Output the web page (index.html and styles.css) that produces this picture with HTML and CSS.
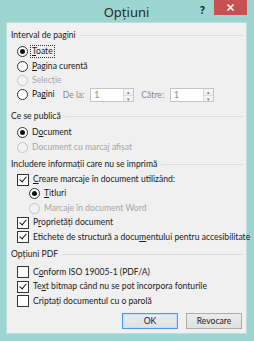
FILE: index.html
```html
<!DOCTYPE html>
<html lang="ro">
<head>
  <meta charset="UTF-8">
  <title>Opțiuni</title>
  <link rel="stylesheet" href="styles.css">
</head>
<body>

  <!-- Title bar -->
  <div class="titlebar">
    <span class="title">Opțiuni</span>
    <span class="help">?</span>
    <span class="close">
      <svg width="9" height="9" viewBox="0 0 9 9"><path d="M1.5 1.5l6 6M7.5 1.5l-6 6" stroke="#fff" stroke-width="1.6"/></svg>
    </span>
  </div>

  <div class="client">
    <div class="content">

      <!-- Interval de pagini -->
      <div class="group-title">Interval de pagini</div>
      <div class="group">
        <div class="row"><span class="radio on"></span><span class="label focus"><u>T</u>oate</span></div>
        <div class="row"><span class="radio"></span><span class="label"><u>P</u>agina curentă</span></div>
        <div class="row disabled"><span class="radio"></span><span class="label">Selecție</span></div>
        <div class="row">
          <span class="radio"></span><span class="label">Pa<u>g</u>ini</span>
          <span class="spin-label spin-from">De la:</span>
          <span class="spin"><span class="spin-value">1</span><span class="spin-btns"><i>&#9652;</i><i>&#9662;</i></span></span>
          <span class="spin-label spin-to">Către:</span>
          <span class="spin"><span class="spin-value">1</span><span class="spin-btns"><i>&#9652;</i><i>&#9662;</i></span></span>
        </div>
      </div>

      <!-- Ce se publica -->
      <div class="group-title sec2">Ce se publică</div>
      <div class="group">
        <div class="row"><span class="radio on"></span><span class="label">D<u>o</u>cument</span></div>
        <div class="row disabled"><span class="radio"></span><span class="label">Document cu marcaj afișat</span></div>
      </div>

      <!-- Includere informatii -->
      <div class="group-title sec3">Includere informații care nu se imprimă</div>
      <div class="group inc">
        <div class="row"><span class="check on"></span><span class="label"><u>C</u>reare marcaje în document utilizând:</span></div>
        <div class="row sub"><span class="radio on"></span><span class="label"><u>T</u>itluri</span></div>
        <div class="row sub disabled"><span class="radio"></span><span class="label">Marcaje în document Word</span></div>
        <div class="row"><span class="check on"></span><span class="label">P<u>r</u>oprietăți document</span></div>
        <div class="row"><span class="check on"></span><span class="label">Etichete de structură a docu<u>m</u>entului pentru accesibilitate</span></div>
      </div>

      <!-- Optiuni PDF -->
      <div class="group-title sec4">Opțiuni PDF</div>
      <div class="group pdf">
        <div class="row"><span class="check"></span><span class="label">C<u>o</u>nform ISO 19005-1 (PDF/A)</span></div>
        <div class="row"><span class="check on"></span><span class="label">Te<u>x</u>t bitmap când nu se pot încorpora fonturile</span></div>
        <div class="row"><span class="check"></span><span class="label">Criptați documentul cu o parolă</span></div>
      </div>

      <div class="buttons">
        <button class="btn default">OK</button>
        <button class="btn">Revocare</button>
      </div>

    </div>
  </div>

</body>
</html>
```

FILE: styles.css
```css
/* Basic Styling */
* {
  box-sizing: border-box;
}
body {
  margin: 0;
  width: 254px;
  height: 341px;
  background-color: #9dd5d1;
  font-family: Lato, "Noto Sans", sans-serif;
  font-size: 8.6px;
  color: #1a1a1a;
  overflow: hidden;
}

/* Title bar */
.titlebar {
  display: flex;
  align-items: flex-start;
  height: 22px;
  padding-right: 7px;
}
.title {
  flex: 1;
  padding-left: 58px;
  text-align: center;
  font-family: "Noto Sans", sans-serif;
  font-size: 13px;
  line-height: 24px;
  color: #2a2a2a;
}
.help {
  width: 19px;
  padding-top: 4px;
  padding-left: 5px;
  font-family: "Noto Sans", sans-serif;
  font-size: 10px;
  font-weight: bold;
  line-height: 12px;
  color: #222;
}
.close {
  width: 33px;
  height: 15px;
  background-color: #c75050;
  display: flex;
  align-items: center;
  justify-content: center;
}

/* Client area */
.client {
  margin: 0 7px 0 6px;
  height: 312px;
  background-color: #f0f0f0;
  border: 1px solid #b8dfdc;
}
.content {
  padding: 4px 3px 0 4px;
}

/* Group headers */
.group-title {
  display: flex;
  align-items: center;
  height: 16px;
  gap: 4px;
  white-space: nowrap;
}
.group-title::after {
  content: "";
  flex: 1;
  height: 1px;
  background-color: #dcdcdc;
}
.sec2 { margin-top: 6px; }
.sec3 { margin-top: 2px; }
.sec4 { margin-top: 2px; }

.group {
  padding-top: 1.5px;
}
.group.inc {
  padding-top: 0;
}
.group.pdf {
  padding-top: 3px;
}

/* Rows */
.row {
  display: flex;
  align-items: center;
  height: 14.4px;
  padding-left: 6px;
  white-space: nowrap;
}
.row.sub {
  padding-left: 18px;
}
.label {
  margin-left: 2px;
  padding: 0 1px;
  border: 1px dotted transparent;
  line-height: 11px;
}
.label.focus {
  border-color: #333;
}
.disabled .label {
  color: #a6a6a6;
}
u {
  text-underline-offset: 1px;
}

/* Radio buttons */
.radio {
  width: 11px;
  height: 11px;
  border: 1px solid #333;
  border-radius: 50%;
  background-color: #fff;
  display: flex;
  align-items: center;
  justify-content: center;
  flex-shrink: 0;
}
.radio.on::after {
  content: "";
  width: 5px;
  height: 5px;
  border-radius: 50%;
  background-color: #111;
}
.disabled .radio {
  border-color: #c4c4c4;
  background-color: #f3f3f3;
}

/* Check boxes */
.check {
  position: relative;
  width: 12px;
  height: 12px;
  border: 1px solid #333;
  background-color: #fff;
  flex-shrink: 0;
}
.check.on::after {
  content: "";
  position: absolute;
  left: 3px;
  top: 0px;
  width: 3px;
  height: 6px;
  border: solid #111;
  border-width: 0 1.6px 1.6px 0;
  transform: rotate(40deg);
}

/* Spin boxes */
.spin-label {
  color: #8a8a8a;
}
.spin-from {
  margin-left: 6px;
  margin-right: 6px;
}
.spin-to {
  margin-left: 7px;
  margin-right: 6px;
}
.spin {
  display: flex;
  width: 44px;
  height: 14px;
  background-color: #fff;
  border: 1px solid #c5c5c5;
}
.spin-value {
  flex: 1;
  padding-left: 3px;
  line-height: 12px;
  color: #8a8a8a;
}
.spin-btns {
  width: 10px;
  display: flex;
  flex-direction: column;
  border-left: 1px solid #dadada;
  background-color: #f4f4f4;
}
.spin-btns i {
  flex: 1;
  font-style: normal;
  font-size: 5px;
  line-height: 6px;
  text-align: center;
  color: #777;
}
.spin-btns i + i {
  border-top: 1px solid #dadada;
}

/* Buttons */
.buttons {
  display: flex;
  justify-content: flex-end;
  gap: 8px;
  margin-top: 5px;
  margin-right: 1px;
}
.btn {
  width: 56px;
  height: 16px;
  padding: 0;
  font-family: inherit;
  font-size: 8.6px;
  color: #1a1a1a;
  background: linear-gradient(#ececec, #e0e0e0);
  border: 1px solid #adadad;
}
.btn.default {
  border-color: #4a9ae6;
  box-shadow: inset 0 0 0 1px #c5def5;
}
```
